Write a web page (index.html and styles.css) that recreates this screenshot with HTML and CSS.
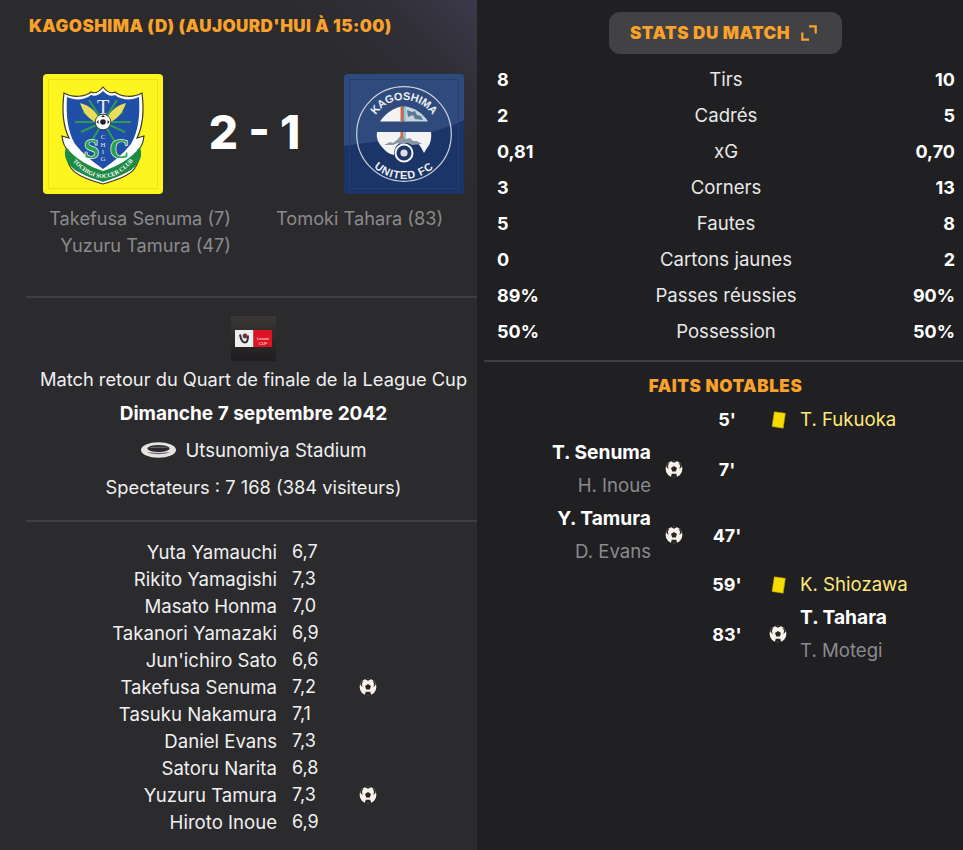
FILE: index.html
```html
<!DOCTYPE html>
<html lang="fr">
<head>
<meta charset="utf-8">
<title>Match</title>
<link rel="stylesheet" href="styles.css">
</head>
<body>
<svg class="defs" width="0" height="0" aria-hidden="true">
  <symbol id="ball" viewBox="0 0 20 20">
    <circle cx="10" cy="10" r="9.300" fill="#f7f3ea"/>
    <path d="M10 6.600l3.300 2.400-1.300 3.900H8l-1.300-3.900z" fill="#2a2628"/>
    <path d="M6.600 1.400L10 3l3.400-1.600C12.300.9 11.200.7 10 .7s-2.300.2-3.400.7zM1.200 7l2.700 3.300-.6-4.200L5 3 2.800 4.200C2.200 5.100 1.600 6 1.200 7zM18.800 7l-2.700 3.300.6-4.200L15 3l2.200 1.200c.6.900 1.200 1.800 1.600 2.800zM6.500 18.600l1-3.300h5l1 3.300c-1.100.5-2.300.7-3.500.7s-2.400-.2-3.500-.7z" fill="#2a2628"/>
  </symbol>
  <symbol id="yellow" viewBox="0 0 15 18">
    <path d="M3.300 .8L14.400 2.300 12.200 17.200 1 15.500z" fill="#f6dc00" stroke="#b49a10" stroke-width=".6"/>
  </symbol>
</svg>

<main class="page">
  <section class="left">
    <h2 class="title">KAGOSHIMA (D) (AUJOURD'HUI À 15:00)</h2>

    <div class="scoreboard">
      <svg class="crest" viewBox="0 0 120 120" role="img" aria-label="Tochigi SC">
        <defs>
          <path id="tochigiArc" d="M27 84 Q60 124 93 84"/>
        </defs>
        <rect width="120" height="120" rx="4" fill="#fdf51e"/>
        <rect x="5.500" y="5.500" width="109" height="109" fill="none" stroke="#ece316" stroke-width="1"/>
        <path d="M60 13C64 18 68 20 72 18C78 23 90 24 99 19C101 35 100 52 94 64L101 62C100 70 98 74 95 76C98 90 90 98 82 102C74 106 67 108 60 110C53 108 46 106 38 102C30 98 22 90 25 76C22 74 20 70 19 62L26 64C20 52 19 35 21 19C30 24 42 23 48 18C52 20 56 18 60 13z" fill="#fff" stroke="#3b3a22" stroke-width="1.200"/>
        <path d="M60 17C64 21 68 23 72 21C78 26 88 27 96 23C97 40 96 56 88 70C80 80 70 88 60 95C50 88 40 80 32 70C24 56 23 40 24 23C32 27 42 26 48 21C52 23 56 21 60 17z" fill="#1f4fa6"/>
        <path d="M60 48L40 38M60 48L80 38M60 48H32M60 48H88M60 48L38 58M60 48L82 58M60 48L46 26M60 48L74 26M60 48L48 68M60 48L72 68" stroke="#2f9a52" stroke-width="2.200"/>
        <path d="M37 29c8 2 15 7 19 15-1 2-2 4-3 4-8-3-13-10-16-19zM83 29c-8 2-15 7-19 15 1 2 2 4 3 4 8-3 13-10 16-19z" fill="#e8de5a"/>
        <text x="60" y="40" class="crest-t">T</text>
        <circle cx="60" cy="48" r="7.800" fill="#fff" stroke="#222" stroke-width=".8"/>
        <circle cx="60" cy="48" r="2.800" fill="#222"/>
        <path d="M60 41l-2 2h4zM53.500 48l2 2v-4zM66.500 48l-2 2v-4z" fill="#222"/>
        <text x="60" y="65" class="crest-sm">C</text>
        <text x="60" y="73" class="crest-sm">H</text>
        <text x="60" y="80" class="crest-sm">I</text>
        <text x="60" y="87" class="crest-sm">G</text>
        <path d="M23 73c9 12 24 20 37 24 13-4 28-12 37-24 3 9 0 16-9 23-10 6-20 9-28 12-8-3-18-6-28-12-9-7-12-14-9-23z" fill="#1d8a45"/>
        <text x="48.500" y="84" class="crest-sc">S</text>
        <text x="76.500" y="84" class="crest-sc">C</text>
        <text class="crest-arc"><textPath href="#tochigiArc" startOffset="50%">TOCHIGI SOCCER CLUB</textPath></text>
      </svg>

      <div class="score">2 - 1</div>

      <svg class="crest" viewBox="0 0 120 120" role="img" aria-label="Kagoshima United FC">
        <defs>
          <path id="kagoTop" d="M26 60a34 34 0 0 1 68 0"/>
          <path id="kagoBot" d="M15 60a45 45 0 0 0 90 0"/>
        </defs>
        <rect width="120" height="120" rx="4" fill="#1b3568"/>
        <path d="M0 72C40 66 90 62 120 46V4a4 4 0 0 0-4-4H4a4 4 0 0 0-4 4z" fill="#2f4a7c"/>
        <rect x="5.500" y="5.500" width="109" height="109" fill="none" stroke="#23406f" stroke-width="1"/>
        <circle cx="60" cy="60" r="47.300" fill="none" stroke="#cfd3da" stroke-width="1.200"/>
        <text class="crest-kago"><textPath href="#kagoTop" startOffset="50%">KAGOSHIMA</textPath></text>
        <text class="crest-kago wide"><textPath href="#kagoBot" startOffset="50%">UNITED FC</textPath></text>
        <path d="M36 47.500c6-9 15-14 22-15v15z" fill="#f4f4f4"/>
        <path d="M61 32.500c10 1 18 7 23 15H61z" fill="#c4d4dc"/>
        <path d="M63 36l5 2 3-1 2 4 4 1 2 4-8-1-2-4-5 2z" fill="#5b7894"/>
        <rect x="56.500" y="32.500" width="3" height="15" fill="#d9653a"/>
        <rect x="59.500" y="32.500" width="2.500" height="15" fill="#8cc6dc"/>
        <path d="M33 58h54c1 7-1 13-4 16l-3 5c-2-4-4-8-7-10-5-3-13-3-17 0-4 2-6 6-6 12-5-1-9-4-12-8-4-5-6-9-5-15z" fill="#f4f4f4"/>
        <path d="M40 71l6-3 3 1 5-4 3-4 3 2 2 2 4-1 3 3 4 0 5 3-10 1-4-2-6 1-4-1-5 2z" fill="#8d97a4"/>
        <rect x="56.500" y="58" width="3" height="6" fill="#d9653a"/>
        <rect x="59.500" y="58" width="2.500" height="6" fill="#8cc6dc"/>
        <circle cx="60" cy="79" r="8.500" fill="#1d3768" stroke="#f4f4f4" stroke-width="2"/>
        <circle cx="60" cy="79" r="3.600" fill="#dde0e6"/>
      </svg>
    </div>

    <div class="scorers">
      <ul class="scorer-list home">
        <li>Takefusa Senuma (7)</li>
        <li>Yuzuru Tamura (47)</li>
      </ul>
      <ul class="scorer-list away">
        <li>Tomoki Tahara (83)</li>
      </ul>
    </div>

    <hr class="rule rule-left">

    <div class="info">
      <div class="cup-tile">
        <svg class="cup" viewBox="0 0 37 17" role="img" aria-label="League Cup">
          <rect width="18.500" height="17" fill="#eeeeee"/>
          <rect x="18.500" width="18.500" height="17" fill="#dc1424"/>
          <path d="M5 4.500c1 6 3 8 5 8s3-2 3-7" fill="none" stroke="#33303a" stroke-width="2"/>
          <circle cx="10" cy="6" r="2.400" fill="#7a2a3a"/>
          <text x="28" y="10" class="cup-text">Levain</text>
          <text x="28" y="14.500" class="cup-text">CUP</text>
        </svg>
      </div>
      <p class="info-line">Match retour du Quart de finale de la League Cup</p>
      <p class="info-line strong">Dimanche 7 septembre 2042</p>
      <p class="info-line stadium">
        <svg class="stadium-icon" viewBox="0 0 38 18" aria-hidden="true">
          <ellipse cx="19" cy="9" rx="18" ry="8" fill="#e6e3df"/>
          <ellipse cx="19" cy="7.500" rx="11.500" ry="3.600" fill="#2a282c"/>
          <path d="M8 7.500c3-2.500 19-2.500 22 0-5-1.300-17-1.300-22 0z" fill="#8a8a94"/>
          <path d="M7 11c6 3 18 3 24 0-4 1-20 1-24 0z" fill="#6b6a73"/>
        </svg>
        <span>Utsunomiya Stadium</span>
      </p>
      <p class="info-line crowd">Spectateurs : 7 168 (384 visiteurs)</p>
    </div>

    <hr class="rule rule-left">

    <ul class="lineup">
      <li><span class="pl">Yuta Yamauchi</span><span class="rt">6,7</span><span class="ic"></span></li>
      <li><span class="pl">Rikito Yamagishi</span><span class="rt">7,3</span><span class="ic"></span></li>
      <li><span class="pl">Masato Honma</span><span class="rt">7,0</span><span class="ic"></span></li>
      <li><span class="pl">Takanori Yamazaki</span><span class="rt">6,9</span><span class="ic"></span></li>
      <li><span class="pl">Jun'ichiro Sato</span><span class="rt">6,6</span><span class="ic"></span></li>
      <li><span class="pl">Takefusa Senuma</span><span class="rt">7,2</span><span class="ic"><svg class="ball"><use href="#ball"/></svg></span></li>
      <li><span class="pl">Tasuku Nakamura</span><span class="rt">7,1</span><span class="ic"></span></li>
      <li><span class="pl">Daniel Evans</span><span class="rt">7,3</span><span class="ic"></span></li>
      <li><span class="pl">Satoru Narita</span><span class="rt">6,8</span><span class="ic"></span></li>
      <li><span class="pl">Yuzuru Tamura</span><span class="rt">7,3</span><span class="ic"><svg class="ball"><use href="#ball"/></svg></span></li>
      <li><span class="pl">Hiroto Inoue</span><span class="rt">6,9</span><span class="ic"></span></li>
    </ul>
  </section>

  <section class="right">
    <div class="btn-wrap">
      <button class="stats-btn" type="button">
        <span>STATS DU MATCH</span>
        <svg class="expand" viewBox="0 0 16 16" aria-hidden="true">
          <path d="M8 1.300h6.700V8.500M1.300 7.500v7.200H8" fill="none" stroke="#f9a22b" stroke-width="2.200"/>
        </svg>
      </button>
    </div>

    <ul class="stats">
      <li><b>8</b><span>Tirs</span><b>10</b></li>
      <li><b>2</b><span>Cadrés</span><b>5</b></li>
      <li><b>0,81</b><span>xG</span><b>0,70</b></li>
      <li><b>3</b><span>Corners</span><b>13</b></li>
      <li><b>5</b><span>Fautes</span><b>8</b></li>
      <li><b>0</b><span>Cartons jaunes</span><b>2</b></li>
      <li><b>89%</b><span>Passes réussies</span><b>90%</b></li>
      <li><b>50%</b><span>Possession</span><b>50%</b></li>
    </ul>

    <hr class="rule rule-right">

    <h3 class="events-title">FAITS NOTABLES</h3>

    <ul class="events">
      <li class="event single">
        <div class="side"></div><div class="icon"></div><div class="min">5'</div>
        <div class="icon"><svg class="card"><use href="#yellow"/></svg></div>
        <div class="side"><span class="booked">T. Fukuoka</span></div>
      </li>
      <li class="event double">
        <div class="side home"><strong>T. Senuma</strong><em>H. Inoue</em></div>
        <div class="icon"><svg class="ball"><use href="#ball"/></svg></div>
        <div class="min">7'</div><div class="icon"></div><div class="side"></div>
      </li>
      <li class="event double">
        <div class="side home"><strong>Y. Tamura</strong><em>D. Evans</em></div>
        <div class="icon"><svg class="ball"><use href="#ball"/></svg></div>
        <div class="min">47'</div><div class="icon"></div><div class="side"></div>
      </li>
      <li class="event single">
        <div class="side"></div><div class="icon"></div><div class="min">59'</div>
        <div class="icon"><svg class="card"><use href="#yellow"/></svg></div>
        <div class="side"><span class="booked">K. Shiozawa</span></div>
      </li>
      <li class="event double">
        <div class="side"></div><div class="icon"></div><div class="min">83'</div>
        <div class="icon"><svg class="ball"><use href="#ball"/></svg></div>
        <div class="side"><strong>T. Tahara</strong><em>T. Motegi</em></div>
      </li>
    </ul>
  </section>
</main>
</body>
</html>
```

FILE: styles.css
```css
* { box-sizing: border-box; }
html, body { margin: 0; height: 100%; }
body {
  background: #201f22;
  color: #f0f0f0;
  font-family: "Inter", "Liberation Sans", sans-serif;
  font-size: 18.600px;
  overflow: hidden;
}
ul { list-style: none; margin: 0; padding: 0; }
p, h2, h3 { margin: 0; }
.defs { position: absolute; }

.page { display: flex; width: 963px; height: 850px; }

.left {
  width: 477px;
  padding: 16px 0 0 26px;
  background:
    linear-gradient(225deg, rgba(88,82,125,.38) 0, rgba(88,82,125,.12) 70px, transparent 150px),
    #2b2a2d;
}
.right { width: 486px; padding-top: 12px; }

.title {
  padding-left: 3px;
  color: #f9a22b;
  font-size: 17px;
  font-weight: 900;
  letter-spacing: .45px;
  line-height: 20px;
}

.scoreboard {
  display: flex;
  align-items: center;
  justify-content: space-between;
  margin-top: 38px;
  padding: 0 13px 0 17px;
}
.crest { width: 120px; height: 120px; display: block; }
.crest text { font-family: "Liberation Serif", serif; text-anchor: middle; }
.crest .crest-t { font-size: 20px; fill: #e6eef6; }
.crest .crest-sm { font-size: 7px; fill: #dfe6ef; }
.crest .crest-sc {
  font-size: 27px;
  font-weight: 700;
  fill: #27a04c;
  stroke: #f2f8f2;
  stroke-width: 1.400;
  paint-order: stroke;
}
.crest .crest-arc { font-size: 6px; font-weight: 700; fill: #fff; }
.crest .crest-kago {
  font-family: "Liberation Sans", sans-serif;
  font-size: 11px;
  font-weight: 700;
  fill: #eceef2;
  letter-spacing: -.2px;
}
.crest .crest-kago.wide { letter-spacing: .8px; }
.score {
  color: #fff;
  font-size: 46px;
  font-weight: 800;
  line-height: 1;
  padding: 0 0 4px 2px;
}

.scorers {
  display: flex;
  margin-top: 11px;
  color: #8b8a8d;
  font-size: 18.200px;
  line-height: 27px;
}
.scorer-list.home { width: 205px; text-align: right; }
.scorer-list.away { flex: 1; padding-left: 45px; }

.rule { border: 0; height: 2px; margin: 0; background: #3f3e42; }
.left .scorers + .rule { margin-top: 37px; }

.info {
  display: flex;
  flex-direction: column;
  align-items: center;
  padding: 18px 0 0 4px;
  height: 222px;
}
.cup-tile {
  display: flex;
  align-items: center;
  justify-content: center;
  width: 45px;
  height: 45px;
  background: linear-gradient(#3a3736, #1f1d1f);
}
.cup { width: 37px; height: 17px; display: block; }
.cup-text { font-family: "Liberation Sans", sans-serif; font-size: 4px; fill: #fff; text-anchor: middle; }
.info-line { font-size: 18.300px; line-height: 36px; white-space: nowrap; }
.info-line.strong { margin-top: 1px; font-size: 19px; font-weight: 700; color: #fff; line-height: 32px; }
.stadium { display: flex; align-items: center; gap: 8px; margin-top: 2px; font-size: 18.600px; }
.crowd { margin-top: 1px; }
.stadium-icon { width: 37px; height: 18px; }

.lineup { padding-top: 16px; }
.lineup li {
  display: flex;
  align-items: center;
  height: 27px;
}
.pl { width: 251px; text-align: right; }
.rt { width: 82px; padding-left: 15px; font-size: 18px; }
.ic { width: 18px; display: flex; }
.ball { width: 18px; height: 18px; display: block; flex: none; }

.btn-wrap { display: flex; justify-content: center; padding-left: 11px; }
.stats-btn {
  display: flex;
  align-items: center;
  gap: 11px;
  width: 233px;
  height: 42px;
  padding: 0 0 0 21px;
  border: 0;
  border-radius: 11px;
  background: #424144;
  color: #f9a22b;
  font: 900 17px "Inter", sans-serif;
  letter-spacing: .55px;
}
.expand { width: 16px; height: 16px; }

.stats { padding: 7px 8px 0 20px; }
.stats li {
  display: grid;
  grid-template-columns: 1fr auto 1fr;
  align-items: center;
  height: 36px;
}
.stats b { font-size: 18px; font-weight: 700; color: #fff; }
.stats b:last-child { text-align: right; }
.stats span { color: #e8e8e8; }

.rule-right { margin: 11px 0 0 7px; }

.events-title {
  padding: 14px 0 0 0;
  margin-left: 11px;
  text-align: center;
  color: #f9a22b;
  font-size: 17px;
  font-weight: 900;
  letter-spacing: .6px;
  line-height: 20px;
}

.events { padding-top: 7px; }
.event {
  display: grid;
  grid-template-columns: 174px 46px 60px 42px 1fr;
  align-items: center;
}
.event.single { height: 33px; }
.event.double { height: 66px; }
.event .side { display: flex; flex-direction: column; line-height: 33px; }
.event .side:last-child { padding-left: 1px; }
.event .side.home { align-items: flex-end; }
.event strong { font-size: 19.200px; font-weight: 700; color: #fff; }
.event em { font-style: normal; color: #8b8a8d; }
.booked { color: #ffe97a; }
.icon { display: flex; justify-content: center; }
.min { text-align: center; font-size: 18px; font-weight: 700; color: #fff; }
.card { width: 15px; height: 18px; display: block; }
```
